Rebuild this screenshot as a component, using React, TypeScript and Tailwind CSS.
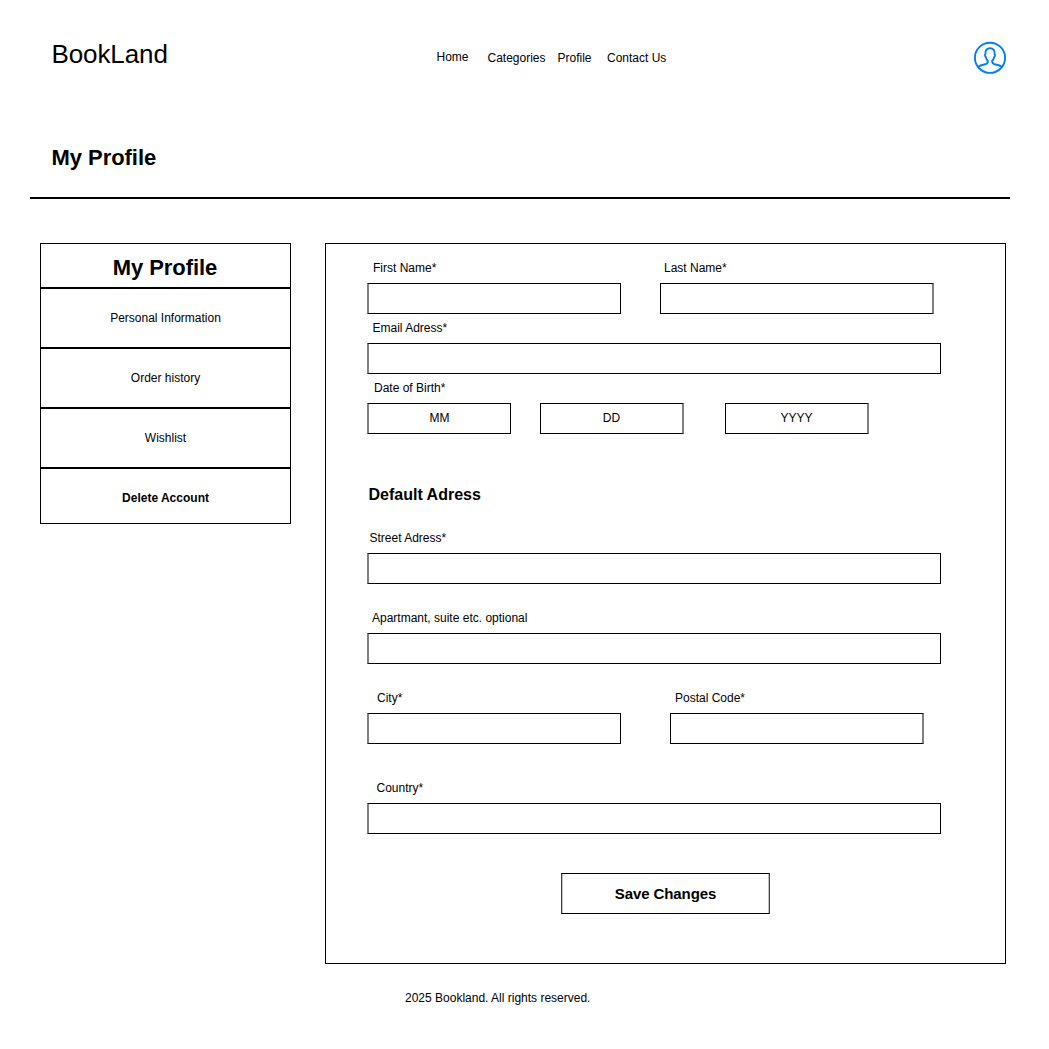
type FieldProps = {
  label: string;
  labelClass: string;
  boxClass: string;
};

const SOFT_LEFT = "border-l-2 border-l-[#808080]";
const SOFT_RIGHT = "border-r-2 border-r-[#808080]";

function Field({ label, labelClass, boxClass }: FieldProps) {
  return (
    <label className="flex flex-col">
      <span className={`h-4 leading-4 whitespace-nowrap ${labelClass}`}>{label}</span>
      <input className={`mt-[7px] block h-[31px] border border-black px-2 outline-none ${boxClass}`} />
    </label>
  );
}

function UserIcon() {
  return (
    <svg width="34" height="34" viewBox="0 0 34 34" fill="none" stroke="#0080f0" strokeWidth="1.9" className="block">
      <circle cx="17" cy="16.8" r="15.1" />
      <path d="M5.2 25.8C7.4 24.2 10.2 23.8 12.6 23.2C14.4 22.7 14.9 22 14.8 19.7C13.7 18.9 13.2 17.7 12.9 16.2C11.9 15.4 11.8 13.8 12.4 13.1C12 9.4 13.7 7.3 17 7.3C20.3 7.3 22 9.4 21.6 13.1C22.2 13.8 22.1 15.4 21.1 16.2C20.8 17.7 20.3 18.9 19.2 19.7C19.1 22 19.6 22.7 21.4 23.2C23.8 23.8 26.6 24.2 28.8 25.8" />
    </svg>
  );
}

const menu = [
  { label: "Personal Information", style: "h-[60px]" },
  { label: "Order history", style: "h-[60px]" },
  { label: "Wishlist", style: "h-[60px]" },
  { label: "Delete Account", style: "h-[56px] pt-[3px] font-bold" },
];

export default function App() {
  return (
    <div className="h-[1049px] w-[1049px] overflow-hidden bg-white font-['Liberation_Sans',Arial,sans-serif] text-[12px] text-black">
      <header className="flex h-[115px] items-start pl-[51.5px]">
        <div className="mt-[39px] w-[385px] text-[26px] leading-[30px] tracking-[-0.1px]">BookLand</div>
        <nav className="flex flex-1 pt-[50px] leading-4">
          <a className="-mt-px w-[51px]">Home</a>
          <a className="w-[70px]">Categories</a>
          <a className="w-[49.5px]">Profile</a>
          <a className="whitespace-nowrap">Contact Us</a>
        </nav>
        <div className="mt-[41px] mr-[42px]">
          <UserIcon />
        </div>
      </header>

      <h1 className="mt-[30px] h-[26px] pl-[51.5px] text-[22px] leading-[26px] font-bold tracking-[-0.05px]">My Profile</h1>
      <hr className="mt-[26px] ml-[30px] h-0.5 w-[980px] border-0 bg-black" />

      <div className="mt-[44px] ml-[40px] flex items-start">
        <aside className="w-[251px] border border-black text-center">
          <h2 className="flex h-[43px] items-center justify-center pt-1 pr-px text-[22px] leading-[26px] font-bold tracking-[-0.05px]">
            My Profile
          </h2>
          {menu.map((item) => (
            <div key={item.label} className={`flex items-center justify-center border-t-2 border-black ${item.style}`}>
              {item.label}
            </div>
          ))}
        </aside>

        <form className="ml-[34px] h-[721px] w-[681px] border border-black pt-4 pl-[41px]">
          <div className="flex gap-[39px]">
            <Field label="First Name*" labelClass="pl-1.5" boxClass={`w-[254px] ${SOFT_LEFT}`} />
            <Field label="Last Name*" labelClass="pl-1" boxClass={`w-[274px] ${SOFT_RIGHT}`} />
          </div>
          <div className="mt-1.5">
            <Field label="Email Adress*" labelClass="pl-[5.5px]" boxClass={`w-[574px] ${SOFT_LEFT}`} />
          </div>
          <div className="mt-1.5 h-4 pl-[7px] leading-4">Date of Birth*</div>
          <div className="mt-[7px] flex">
            <div className={`flex h-[31px] w-[144px] items-center justify-center border border-black pb-0.5 ${SOFT_LEFT}`}>MM</div>
            <div className={`ml-[29px] flex h-[31px] w-[144px] items-center justify-center border border-black pb-0.5 ${SOFT_RIGHT}`}>DD</div>
            <div className={`ml-[41px] flex h-[31px] w-[144px] items-center justify-center border border-black pb-0.5 ${SOFT_RIGHT}`}>YYYY</div>
          </div>

          <h3 className="mt-[51px] h-5 pl-[1.5px] text-[16px] leading-5 font-bold">Default Adress</h3>
          <div className="mt-[25px]">
            <Field label="Street Adress*" labelClass="pl-[2.5px]" boxClass={`w-[574px] ${SOFT_LEFT}`} />
          </div>
          <div className="mt-[26px]">
            <Field label="Apartmant, suite etc. optional" labelClass="pl-[5px]" boxClass={`w-[574px] ${SOFT_LEFT}`} />
          </div>
          <div className="mt-[26px] flex gap-[49px]">
            <Field label="City*" labelClass="pl-2.5" boxClass={`w-[254px] ${SOFT_LEFT}`} />
            <Field label="Postal Code*" labelClass="pl-[5px]" boxClass={`w-[254px] ${SOFT_RIGHT}`} />
          </div>
          <div className="mt-9">
            <Field label="Country*" labelClass="pl-[9.5px]" boxClass={`w-[574px] ${SOFT_LEFT}`} />
          </div>
          <button
            type="button"
            className="mt-[39px] ml-[194px] block h-[41px] w-[209px] border border-x-[#404040] border-y-black pt-0.5 text-[15px] font-bold tracking-[-0.08px] shadow-[inset_1px_0_0_#bfbfbf,inset_-1px_0_0_#bfbfbf]"
          >
            Save Changes
          </button>
        </form>
      </div>

      <footer className="mt-[26px] pl-[405px] leading-4">2025 Bookland. All rights reserved.</footer>
    </div>
  );
}
